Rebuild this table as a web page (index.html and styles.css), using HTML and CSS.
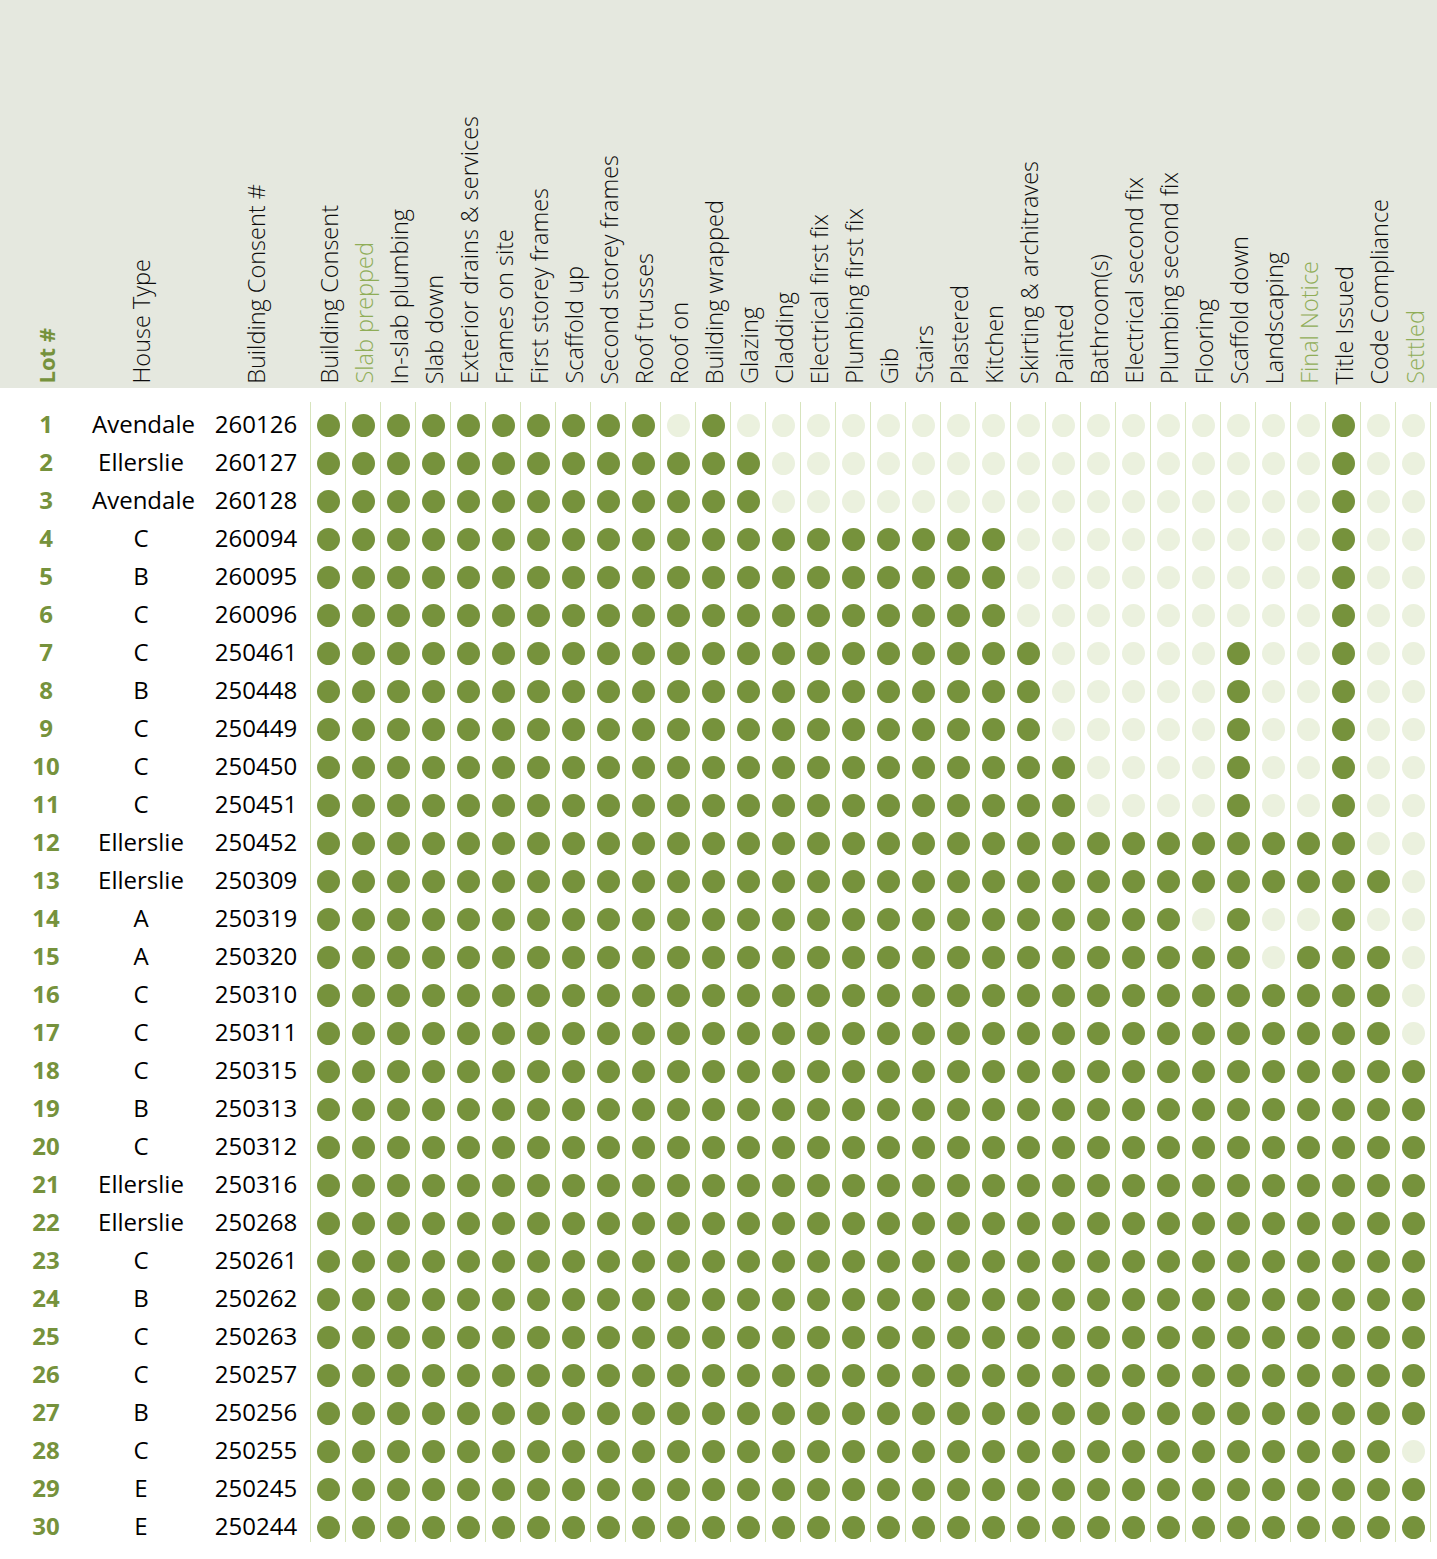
FILE: index.html
```html
<!DOCTYPE html>
<html lang="en">
<head>
<meta charset="utf-8">
<title>Build progress</title>
<link rel="stylesheet" href="styles.css">
</head>
<body>
<div class="head">
  <div class="grid hgrid">
    <div class="h lot"><span>Lot #</span></div>
    <div class="h"><span>House Type</span></div>
    <div class="h bc"><span>Building Consent #</span></div>
    <div class="h s"><span>Building Consent</span></div>
    <div class="h s g"><span>Slab prepped</span></div>
    <div class="h s"><span>In-slab plumbing</span></div>
    <div class="h s"><span>Slab down</span></div>
    <div class="h s"><span>Exterior drains &amp; services</span></div>
    <div class="h s"><span>Frames on site</span></div>
    <div class="h s"><span>First storey frames</span></div>
    <div class="h s"><span>Scaffold up</span></div>
    <div class="h s"><span>Second storey frames</span></div>
    <div class="h s"><span>Roof trusses</span></div>
    <div class="h s"><span>Roof on</span></div>
    <div class="h s"><span>Building wrapped</span></div>
    <div class="h s"><span>Glazing</span></div>
    <div class="h s"><span>Cladding</span></div>
    <div class="h s"><span>Electrical first fix</span></div>
    <div class="h s"><span>Plumbing first fix</span></div>
    <div class="h s"><span>Gib</span></div>
    <div class="h s"><span>Stairs</span></div>
    <div class="h s"><span>Plastered</span></div>
    <div class="h s"><span>Kitchen</span></div>
    <div class="h s"><span>Skirting &amp; architraves</span></div>
    <div class="h s"><span>Painted</span></div>
    <div class="h s"><span>Bathroom(s)</span></div>
    <div class="h s"><span>Electrical second fix</span></div>
    <div class="h s"><span>Plumbing second fix</span></div>
    <div class="h s"><span>Flooring</span></div>
    <div class="h s"><span>Scaffold down</span></div>
    <div class="h s"><span>Landscaping</span></div>
    <div class="h s g"><span>Final Notice</span></div>
    <div class="h s"><span>Title Issued</span></div>
    <div class="h s"><span>Code Compliance</span></div>
    <div class="h s g"><span>Settled</span></div>
  </div>
</div>
<div class="rows">
<div class="grid row"><span class="t n">1</span><span class="t">Avendale</span><span class="t bc">260126</span><i class=y></i><i class=y></i><i class=y></i><i class=y></i><i class=y></i><i class=y></i><i class=y></i><i class=y></i><i class=y></i><i class=y></i><i></i><i class=y></i><i></i><i></i><i></i><i></i><i></i><i></i><i></i><i></i><i></i><i></i><i></i><i></i><i></i><i></i><i></i><i></i><i></i><i class=y></i><i></i><i></i></div>
<div class="grid row"><span class="t n">2</span><span class="t">Ellerslie</span><span class="t bc">260127</span><i class=y></i><i class=y></i><i class=y></i><i class=y></i><i class=y></i><i class=y></i><i class=y></i><i class=y></i><i class=y></i><i class=y></i><i class=y></i><i class=y></i><i class=y></i><i></i><i></i><i></i><i></i><i></i><i></i><i></i><i></i><i></i><i></i><i></i><i></i><i></i><i></i><i></i><i></i><i class=y></i><i></i><i></i></div>
<div class="grid row"><span class="t n">3</span><span class="t">Avendale</span><span class="t bc">260128</span><i class=y></i><i class=y></i><i class=y></i><i class=y></i><i class=y></i><i class=y></i><i class=y></i><i class=y></i><i class=y></i><i class=y></i><i class=y></i><i class=y></i><i class=y></i><i></i><i></i><i></i><i></i><i></i><i></i><i></i><i></i><i></i><i></i><i></i><i></i><i></i><i></i><i></i><i></i><i class=y></i><i></i><i></i></div>
<div class="grid row"><span class="t n">4</span><span class="t">C</span><span class="t bc">260094</span><i class=y></i><i class=y></i><i class=y></i><i class=y></i><i class=y></i><i class=y></i><i class=y></i><i class=y></i><i class=y></i><i class=y></i><i class=y></i><i class=y></i><i class=y></i><i class=y></i><i class=y></i><i class=y></i><i class=y></i><i class=y></i><i class=y></i><i class=y></i><i></i><i></i><i></i><i></i><i></i><i></i><i></i><i></i><i></i><i class=y></i><i></i><i></i></div>
<div class="grid row"><span class="t n">5</span><span class="t">B</span><span class="t bc">260095</span><i class=y></i><i class=y></i><i class=y></i><i class=y></i><i class=y></i><i class=y></i><i class=y></i><i class=y></i><i class=y></i><i class=y></i><i class=y></i><i class=y></i><i class=y></i><i class=y></i><i class=y></i><i class=y></i><i class=y></i><i class=y></i><i class=y></i><i class=y></i><i></i><i></i><i></i><i></i><i></i><i></i><i></i><i></i><i></i><i class=y></i><i></i><i></i></div>
<div class="grid row"><span class="t n">6</span><span class="t">C</span><span class="t bc">260096</span><i class=y></i><i class=y></i><i class=y></i><i class=y></i><i class=y></i><i class=y></i><i class=y></i><i class=y></i><i class=y></i><i class=y></i><i class=y></i><i class=y></i><i class=y></i><i class=y></i><i class=y></i><i class=y></i><i class=y></i><i class=y></i><i class=y></i><i class=y></i><i></i><i></i><i></i><i></i><i></i><i></i><i></i><i></i><i></i><i class=y></i><i></i><i></i></div>
<div class="grid row"><span class="t n">7</span><span class="t">C</span><span class="t bc">250461</span><i class=y></i><i class=y></i><i class=y></i><i class=y></i><i class=y></i><i class=y></i><i class=y></i><i class=y></i><i class=y></i><i class=y></i><i class=y></i><i class=y></i><i class=y></i><i class=y></i><i class=y></i><i class=y></i><i class=y></i><i class=y></i><i class=y></i><i class=y></i><i class=y></i><i></i><i></i><i></i><i></i><i></i><i class=y></i><i></i><i></i><i class=y></i><i></i><i></i></div>
<div class="grid row"><span class="t n">8</span><span class="t">B</span><span class="t bc">250448</span><i class=y></i><i class=y></i><i class=y></i><i class=y></i><i class=y></i><i class=y></i><i class=y></i><i class=y></i><i class=y></i><i class=y></i><i class=y></i><i class=y></i><i class=y></i><i class=y></i><i class=y></i><i class=y></i><i class=y></i><i class=y></i><i class=y></i><i class=y></i><i class=y></i><i></i><i></i><i></i><i></i><i></i><i class=y></i><i></i><i></i><i class=y></i><i></i><i></i></div>
<div class="grid row"><span class="t n">9</span><span class="t">C</span><span class="t bc">250449</span><i class=y></i><i class=y></i><i class=y></i><i class=y></i><i class=y></i><i class=y></i><i class=y></i><i class=y></i><i class=y></i><i class=y></i><i class=y></i><i class=y></i><i class=y></i><i class=y></i><i class=y></i><i class=y></i><i class=y></i><i class=y></i><i class=y></i><i class=y></i><i class=y></i><i></i><i></i><i></i><i></i><i></i><i class=y></i><i></i><i></i><i class=y></i><i></i><i></i></div>
<div class="grid row"><span class="t n">10</span><span class="t">C</span><span class="t bc">250450</span><i class=y></i><i class=y></i><i class=y></i><i class=y></i><i class=y></i><i class=y></i><i class=y></i><i class=y></i><i class=y></i><i class=y></i><i class=y></i><i class=y></i><i class=y></i><i class=y></i><i class=y></i><i class=y></i><i class=y></i><i class=y></i><i class=y></i><i class=y></i><i class=y></i><i class=y></i><i></i><i></i><i></i><i></i><i class=y></i><i></i><i></i><i class=y></i><i></i><i></i></div>
<div class="grid row"><span class="t n">11</span><span class="t">C</span><span class="t bc">250451</span><i class=y></i><i class=y></i><i class=y></i><i class=y></i><i class=y></i><i class=y></i><i class=y></i><i class=y></i><i class=y></i><i class=y></i><i class=y></i><i class=y></i><i class=y></i><i class=y></i><i class=y></i><i class=y></i><i class=y></i><i class=y></i><i class=y></i><i class=y></i><i class=y></i><i class=y></i><i></i><i></i><i></i><i></i><i class=y></i><i></i><i></i><i class=y></i><i></i><i></i></div>
<div class="grid row"><span class="t n">12</span><span class="t">Ellerslie</span><span class="t bc">250452</span><i class=y></i><i class=y></i><i class=y></i><i class=y></i><i class=y></i><i class=y></i><i class=y></i><i class=y></i><i class=y></i><i class=y></i><i class=y></i><i class=y></i><i class=y></i><i class=y></i><i class=y></i><i class=y></i><i class=y></i><i class=y></i><i class=y></i><i class=y></i><i class=y></i><i class=y></i><i class=y></i><i class=y></i><i class=y></i><i class=y></i><i class=y></i><i class=y></i><i class=y></i><i class=y></i><i></i><i></i></div>
<div class="grid row"><span class="t n">13</span><span class="t">Ellerslie</span><span class="t bc">250309</span><i class=y></i><i class=y></i><i class=y></i><i class=y></i><i class=y></i><i class=y></i><i class=y></i><i class=y></i><i class=y></i><i class=y></i><i class=y></i><i class=y></i><i class=y></i><i class=y></i><i class=y></i><i class=y></i><i class=y></i><i class=y></i><i class=y></i><i class=y></i><i class=y></i><i class=y></i><i class=y></i><i class=y></i><i class=y></i><i class=y></i><i class=y></i><i class=y></i><i class=y></i><i class=y></i><i class=y></i><i></i></div>
<div class="grid row"><span class="t n">14</span><span class="t">A</span><span class="t bc">250319</span><i class=y></i><i class=y></i><i class=y></i><i class=y></i><i class=y></i><i class=y></i><i class=y></i><i class=y></i><i class=y></i><i class=y></i><i class=y></i><i class=y></i><i class=y></i><i class=y></i><i class=y></i><i class=y></i><i class=y></i><i class=y></i><i class=y></i><i class=y></i><i class=y></i><i class=y></i><i class=y></i><i class=y></i><i class=y></i><i></i><i class=y></i><i></i><i></i><i class=y></i><i></i><i></i></div>
<div class="grid row"><span class="t n">15</span><span class="t">A</span><span class="t bc">250320</span><i class=y></i><i class=y></i><i class=y></i><i class=y></i><i class=y></i><i class=y></i><i class=y></i><i class=y></i><i class=y></i><i class=y></i><i class=y></i><i class=y></i><i class=y></i><i class=y></i><i class=y></i><i class=y></i><i class=y></i><i class=y></i><i class=y></i><i class=y></i><i class=y></i><i class=y></i><i class=y></i><i class=y></i><i class=y></i><i class=y></i><i class=y></i><i></i><i class=y></i><i class=y></i><i class=y></i><i></i></div>
<div class="grid row"><span class="t n">16</span><span class="t">C</span><span class="t bc">250310</span><i class=y></i><i class=y></i><i class=y></i><i class=y></i><i class=y></i><i class=y></i><i class=y></i><i class=y></i><i class=y></i><i class=y></i><i class=y></i><i class=y></i><i class=y></i><i class=y></i><i class=y></i><i class=y></i><i class=y></i><i class=y></i><i class=y></i><i class=y></i><i class=y></i><i class=y></i><i class=y></i><i class=y></i><i class=y></i><i class=y></i><i class=y></i><i class=y></i><i class=y></i><i class=y></i><i class=y></i><i></i></div>
<div class="grid row"><span class="t n">17</span><span class="t">C</span><span class="t bc">250311</span><i class=y></i><i class=y></i><i class=y></i><i class=y></i><i class=y></i><i class=y></i><i class=y></i><i class=y></i><i class=y></i><i class=y></i><i class=y></i><i class=y></i><i class=y></i><i class=y></i><i class=y></i><i class=y></i><i class=y></i><i class=y></i><i class=y></i><i class=y></i><i class=y></i><i class=y></i><i class=y></i><i class=y></i><i class=y></i><i class=y></i><i class=y></i><i class=y></i><i class=y></i><i class=y></i><i class=y></i><i></i></div>
<div class="grid row"><span class="t n">18</span><span class="t">C</span><span class="t bc">250315</span><i class=y></i><i class=y></i><i class=y></i><i class=y></i><i class=y></i><i class=y></i><i class=y></i><i class=y></i><i class=y></i><i class=y></i><i class=y></i><i class=y></i><i class=y></i><i class=y></i><i class=y></i><i class=y></i><i class=y></i><i class=y></i><i class=y></i><i class=y></i><i class=y></i><i class=y></i><i class=y></i><i class=y></i><i class=y></i><i class=y></i><i class=y></i><i class=y></i><i class=y></i><i class=y></i><i class=y></i><i class=y></i></div>
<div class="grid row"><span class="t n">19</span><span class="t">B</span><span class="t bc">250313</span><i class=y></i><i class=y></i><i class=y></i><i class=y></i><i class=y></i><i class=y></i><i class=y></i><i class=y></i><i class=y></i><i class=y></i><i class=y></i><i class=y></i><i class=y></i><i class=y></i><i class=y></i><i class=y></i><i class=y></i><i class=y></i><i class=y></i><i class=y></i><i class=y></i><i class=y></i><i class=y></i><i class=y></i><i class=y></i><i class=y></i><i class=y></i><i class=y></i><i class=y></i><i class=y></i><i class=y></i><i class=y></i></div>
<div class="grid row"><span class="t n">20</span><span class="t">C</span><span class="t bc">250312</span><i class=y></i><i class=y></i><i class=y></i><i class=y></i><i class=y></i><i class=y></i><i class=y></i><i class=y></i><i class=y></i><i class=y></i><i class=y></i><i class=y></i><i class=y></i><i class=y></i><i class=y></i><i class=y></i><i class=y></i><i class=y></i><i class=y></i><i class=y></i><i class=y></i><i class=y></i><i class=y></i><i class=y></i><i class=y></i><i class=y></i><i class=y></i><i class=y></i><i class=y></i><i class=y></i><i class=y></i><i class=y></i></div>
<div class="grid row"><span class="t n">21</span><span class="t">Ellerslie</span><span class="t bc">250316</span><i class=y></i><i class=y></i><i class=y></i><i class=y></i><i class=y></i><i class=y></i><i class=y></i><i class=y></i><i class=y></i><i class=y></i><i class=y></i><i class=y></i><i class=y></i><i class=y></i><i class=y></i><i class=y></i><i class=y></i><i class=y></i><i class=y></i><i class=y></i><i class=y></i><i class=y></i><i class=y></i><i class=y></i><i class=y></i><i class=y></i><i class=y></i><i class=y></i><i class=y></i><i class=y></i><i class=y></i><i class=y></i></div>
<div class="grid row"><span class="t n">22</span><span class="t">Ellerslie</span><span class="t bc">250268</span><i class=y></i><i class=y></i><i class=y></i><i class=y></i><i class=y></i><i class=y></i><i class=y></i><i class=y></i><i class=y></i><i class=y></i><i class=y></i><i class=y></i><i class=y></i><i class=y></i><i class=y></i><i class=y></i><i class=y></i><i class=y></i><i class=y></i><i class=y></i><i class=y></i><i class=y></i><i class=y></i><i class=y></i><i class=y></i><i class=y></i><i class=y></i><i class=y></i><i class=y></i><i class=y></i><i class=y></i><i class=y></i></div>
<div class="grid row"><span class="t n">23</span><span class="t">C</span><span class="t bc">250261</span><i class=y></i><i class=y></i><i class=y></i><i class=y></i><i class=y></i><i class=y></i><i class=y></i><i class=y></i><i class=y></i><i class=y></i><i class=y></i><i class=y></i><i class=y></i><i class=y></i><i class=y></i><i class=y></i><i class=y></i><i class=y></i><i class=y></i><i class=y></i><i class=y></i><i class=y></i><i class=y></i><i class=y></i><i class=y></i><i class=y></i><i class=y></i><i class=y></i><i class=y></i><i class=y></i><i class=y></i><i class=y></i></div>
<div class="grid row"><span class="t n">24</span><span class="t">B</span><span class="t bc">250262</span><i class=y></i><i class=y></i><i class=y></i><i class=y></i><i class=y></i><i class=y></i><i class=y></i><i class=y></i><i class=y></i><i class=y></i><i class=y></i><i class=y></i><i class=y></i><i class=y></i><i class=y></i><i class=y></i><i class=y></i><i class=y></i><i class=y></i><i class=y></i><i class=y></i><i class=y></i><i class=y></i><i class=y></i><i class=y></i><i class=y></i><i class=y></i><i class=y></i><i class=y></i><i class=y></i><i class=y></i><i class=y></i></div>
<div class="grid row"><span class="t n">25</span><span class="t">C</span><span class="t bc">250263</span><i class=y></i><i class=y></i><i class=y></i><i class=y></i><i class=y></i><i class=y></i><i class=y></i><i class=y></i><i class=y></i><i class=y></i><i class=y></i><i class=y></i><i class=y></i><i class=y></i><i class=y></i><i class=y></i><i class=y></i><i class=y></i><i class=y></i><i class=y></i><i class=y></i><i class=y></i><i class=y></i><i class=y></i><i class=y></i><i class=y></i><i class=y></i><i class=y></i><i class=y></i><i class=y></i><i class=y></i><i class=y></i></div>
<div class="grid row"><span class="t n">26</span><span class="t">C</span><span class="t bc">250257</span><i class=y></i><i class=y></i><i class=y></i><i class=y></i><i class=y></i><i class=y></i><i class=y></i><i class=y></i><i class=y></i><i class=y></i><i class=y></i><i class=y></i><i class=y></i><i class=y></i><i class=y></i><i class=y></i><i class=y></i><i class=y></i><i class=y></i><i class=y></i><i class=y></i><i class=y></i><i class=y></i><i class=y></i><i class=y></i><i class=y></i><i class=y></i><i class=y></i><i class=y></i><i class=y></i><i class=y></i><i class=y></i></div>
<div class="grid row"><span class="t n">27</span><span class="t">B</span><span class="t bc">250256</span><i class=y></i><i class=y></i><i class=y></i><i class=y></i><i class=y></i><i class=y></i><i class=y></i><i class=y></i><i class=y></i><i class=y></i><i class=y></i><i class=y></i><i class=y></i><i class=y></i><i class=y></i><i class=y></i><i class=y></i><i class=y></i><i class=y></i><i class=y></i><i class=y></i><i class=y></i><i class=y></i><i class=y></i><i class=y></i><i class=y></i><i class=y></i><i class=y></i><i class=y></i><i class=y></i><i class=y></i><i class=y></i></div>
<div class="grid row"><span class="t n">28</span><span class="t">C</span><span class="t bc">250255</span><i class=y></i><i class=y></i><i class=y></i><i class=y></i><i class=y></i><i class=y></i><i class=y></i><i class=y></i><i class=y></i><i class=y></i><i class=y></i><i class=y></i><i class=y></i><i class=y></i><i class=y></i><i class=y></i><i class=y></i><i class=y></i><i class=y></i><i class=y></i><i class=y></i><i class=y></i><i class=y></i><i class=y></i><i class=y></i><i class=y></i><i class=y></i><i class=y></i><i class=y></i><i class=y></i><i class=y></i><i></i></div>
<div class="grid row"><span class="t n">29</span><span class="t">E</span><span class="t bc">250245</span><i class=y></i><i class=y></i><i class=y></i><i class=y></i><i class=y></i><i class=y></i><i class=y></i><i class=y></i><i class=y></i><i class=y></i><i class=y></i><i class=y></i><i class=y></i><i class=y></i><i class=y></i><i class=y></i><i class=y></i><i class=y></i><i class=y></i><i class=y></i><i class=y></i><i class=y></i><i class=y></i><i class=y></i><i class=y></i><i class=y></i><i class=y></i><i class=y></i><i class=y></i><i class=y></i><i class=y></i><i class=y></i></div>
<div class="grid row"><span class="t n">30</span><span class="t">E</span><span class="t bc">250244</span><i class=y></i><i class=y></i><i class=y></i><i class=y></i><i class=y></i><i class=y></i><i class=y></i><i class=y></i><i class=y></i><i class=y></i><i class=y></i><i class=y></i><i class=y></i><i class=y></i><i class=y></i><i class=y></i><i class=y></i><i class=y></i><i class=y></i><i class=y></i><i class=y></i><i class=y></i><i class=y></i><i class=y></i><i class=y></i><i class=y></i><i class=y></i><i class=y></i><i class=y></i><i class=y></i><i class=y></i><i class=y></i></div>
</div>
</body>
</html>
```

FILE: styles.css
```css
* {
  box-sizing: border-box;
}

body {
  margin: 0;
  background: #ffffff;
  font-family: "Open Sans", "Liberation Sans", sans-serif;
  color: #000000;
}

.grid {
  display: grid;
  grid-template-columns: 92px 98px 120px repeat(31, 35px) 36px;
}

.head {
  background: #e5e8df;
  height: 388px;
}

.hgrid {
  height: 388px;
}

.h {
  display: flex;
  justify-content: center;
  align-items: flex-end;
  padding-bottom: 4px;
}

.h.s {
  padding-left: 4px;
}

.h span {
  writing-mode: vertical-rl;
  transform: rotate(180deg);
  font-size: 23.5px;
  font-weight: 300;
  line-height: 31px;
  white-space: nowrap;
  color: #0d0d0d;
}

.h.bc {
  padding-left: 12px;
}

.h.lot span {
  font-size: 22px;
  font-weight: 700;
  color: #76923c;
}

.h.g span {
  color: #8fad57;
}

.rows {
  margin-top: 14px;
}

.row {
  height: 38px;
}

.t {
  font-size: 24px;
  line-height: 32px;
  padding-top: 6px;
  text-align: center;
  white-space: nowrap;
}

.t.n {
  font-weight: 700;
  color: #76923c;
}

.t.bc {
  padding-left: 12px;
}

.row i {
  display: flex;
  justify-content: center;
  padding-top: 12px;
  border-left: 1px solid #d7e4bd;
}

.row i:last-child {
  border-right: 1px solid #d7e4bd;
}

.row i::before {
  content: "";
  width: 23px;
  height: 23px;
  border-radius: 50%;
  background: #ebf1de;
}

.row i.y::before {
  background: #76923c;
}
```
